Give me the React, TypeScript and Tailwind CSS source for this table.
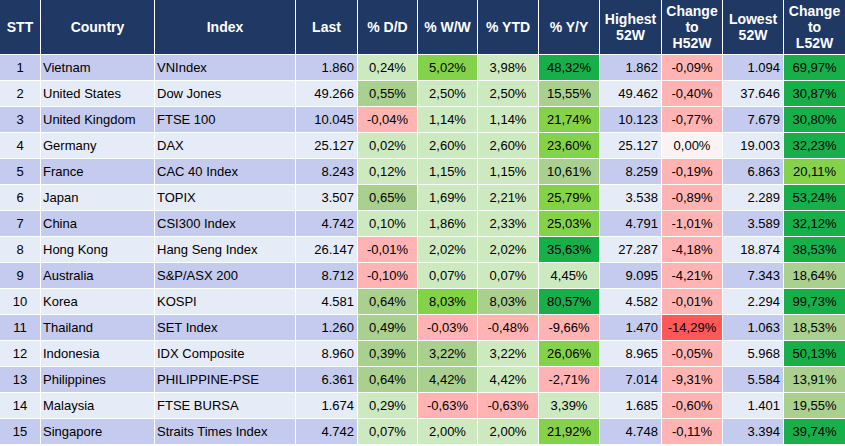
import React from "react";

type Tone = "L" | "M" | "B" | "D" | "R" | "X" | "N";

interface Row {
  country: string;
  index: string;
  last: string;
  dd: [string, Tone];
  ww: [string, Tone];
  ytd: [string, Tone];
  yy: [string, Tone];
  high: string;
  toHigh: [string, Tone];
  low: string;
  toLow: [string, Tone];
}

const tones: Record<Tone, string> = {
  L: "bg-[#cde9bf]",
  M: "bg-[#a9d08e]",
  B: "bg-[#84d24a]",
  D: "bg-[#18ae4a]",
  R: "bg-[#ffb3b3]",
  X: "bg-[#ff5858]",
  N: "bg-[#fbf3f3]",
};

const rows: Row[] = [
  { country: "Vietnam", index: "VNIndex", last: "1.860", dd: ["0,24%", "L"], ww: ["5,02%", "B"], ytd: ["3,98%", "L"], yy: ["48,32%", "D"], high: "1.862", toHigh: ["-0,09%", "R"], low: "1.094", toLow: ["69,97%", "D"] },
  { country: "United States", index: "Dow Jones", last: "49.266", dd: ["0,55%", "M"], ww: ["2,50%", "L"], ytd: ["2,50%", "L"], yy: ["15,55%", "M"], high: "49.462", toHigh: ["-0,40%", "R"], low: "37.646", toLow: ["30,87%", "D"] },
  { country: "United Kingdom", index: "FTSE 100", last: "10.045", dd: ["-0,04%", "R"], ww: ["1,14%", "L"], ytd: ["1,14%", "L"], yy: ["21,74%", "B"], high: "10.123", toHigh: ["-0,77%", "R"], low: "7.679", toLow: ["30,80%", "D"] },
  { country: "Germany", index: "DAX", last: "25.127", dd: ["0,02%", "L"], ww: ["2,60%", "L"], ytd: ["2,60%", "L"], yy: ["23,60%", "B"], high: "25.127", toHigh: ["0,00%", "N"], low: "19.003", toLow: ["32,23%", "D"] },
  { country: "France", index: "CAC 40 Index", last: "8.243", dd: ["0,12%", "L"], ww: ["1,15%", "L"], ytd: ["1,15%", "L"], yy: ["10,61%", "M"], high: "8.259", toHigh: ["-0,19%", "R"], low: "6.863", toLow: ["20,11%", "B"] },
  { country: "Japan", index: "TOPIX", last: "3.507", dd: ["0,65%", "M"], ww: ["1,69%", "L"], ytd: ["2,21%", "L"], yy: ["25,79%", "B"], high: "3.538", toHigh: ["-0,89%", "R"], low: "2.289", toLow: ["53,24%", "D"] },
  { country: "China", index: "CSI300 Index", last: "4.742", dd: ["0,10%", "L"], ww: ["1,86%", "L"], ytd: ["2,33%", "L"], yy: ["25,03%", "B"], high: "4.791", toHigh: ["-1,01%", "R"], low: "3.589", toLow: ["32,12%", "D"] },
  { country: "Hong Kong", index: "Hang Seng Index", last: "26.147", dd: ["-0,01%", "R"], ww: ["2,02%", "L"], ytd: ["2,02%", "L"], yy: ["35,63%", "D"], high: "27.287", toHigh: ["-4,18%", "R"], low: "18.874", toLow: ["38,53%", "D"] },
  { country: "Australia", index: "S&P/ASX 200", last: "8.712", dd: ["-0,10%", "R"], ww: ["0,07%", "L"], ytd: ["0,07%", "L"], yy: ["4,45%", "L"], high: "9.095", toHigh: ["-4,21%", "R"], low: "7.343", toLow: ["18,64%", "M"] },
  { country: "Korea", index: "KOSPI", last: "4.581", dd: ["0,64%", "M"], ww: ["8,03%", "B"], ytd: ["8,03%", "M"], yy: ["80,57%", "D"], high: "4.582", toHigh: ["-0,01%", "R"], low: "2.294", toLow: ["99,73%", "D"] },
  { country: "Thailand", index: "SET Index", last: "1.260", dd: ["0,49%", "M"], ww: ["-0,03%", "R"], ytd: ["-0,48%", "R"], yy: ["-9,66%", "R"], high: "1.470", toHigh: ["-14,29%", "X"], low: "1.063", toLow: ["18,53%", "M"] },
  { country: "Indonesia", index: "IDX Composite", last: "8.960", dd: ["0,39%", "M"], ww: ["3,22%", "M"], ytd: ["3,22%", "L"], yy: ["26,06%", "B"], high: "8.965", toHigh: ["-0,05%", "R"], low: "5.968", toLow: ["50,13%", "D"] },
  { country: "Philippines", index: "PHILIPPINE-PSE", last: "6.361", dd: ["0,64%", "M"], ww: ["4,42%", "M"], ytd: ["4,42%", "L"], yy: ["-2,71%", "R"], high: "7.014", toHigh: ["-9,31%", "R"], low: "5.584", toLow: ["13,91%", "M"] },
  { country: "Malaysia", index: "FTSE BURSA", last: "1.674", dd: ["0,29%", "L"], ww: ["-0,63%", "R"], ytd: ["-0,63%", "R"], yy: ["3,39%", "L"], high: "1.685", toHigh: ["-0,60%", "R"], low: "1.401", toLow: ["19,55%", "M"] },
  { country: "Singapore", index: "Straits Times Index", last: "4.742", dd: ["0,07%", "L"], ww: ["2,00%", "L"], ytd: ["2,00%", "L"], yy: ["21,92%", "B"], high: "4.748", toHigh: ["-0,11%", "R"], low: "3.394", toLow: ["39,74%", "D"] },
];

// header labels, one entry per line
const headers: string[][] = [
  ["STT"],
  ["Country"],
  ["Index"],
  ["Last"],
  ["% D/D"],
  ["% W/W"],
  ["% YTD"],
  ["% Y/Y"],
  ["Highest", "52W"],
  ["Change", "to", "H52W"],
  ["Lowest", "52W"],
  ["Change", "to", "L52W"],
];

function Pct({ v }: { v: [string, Tone] }) {
  return (
    <div className={`flex items-center justify-center ${tones[v[1]]}`}>{v[0]}</div>
  );
}

export default function App() {
  return (
    <div
      className="w-[845px] h-[446px] bg-white text-black overflow-hidden"
      style={{ fontFamily: '"Liberation Sans", Arial, sans-serif' }}
    >
      <div className="grid grid-cols-[40px_113px_140px_61px_59px_59px_60px_60px_61px_60px_60px_61px] grid-rows-[54px] auto-rows-[25px] gap-px bg-white text-[13px]">
        {headers.map((lines, i) => (
          <div
            key={i}
            className="bg-[#1f3864] text-white font-bold text-[14px] leading-[16px] flex flex-col items-center justify-center text-center"
          >
            {lines.map((line) => (
              <span key={line}>{line}</span>
            ))}
          </div>
        ))}

        {rows.map((r, i) => {
          const base = i % 2 === 0 ? "bg-[#c4cbee]" : "bg-[#e6ebf8]";
          return (
            <React.Fragment key={r.country}>
              <div className={`flex items-center justify-center ${base}`}>{i + 1}</div>
              <div className={`flex items-center pl-[2px] ${base}`}>{r.country}</div>
              <div className={`flex items-center pl-[2px] ${base}`}>{r.index}</div>
              <div className={`flex items-center justify-end pr-[3px] ${base}`}>{r.last}</div>
              <Pct v={r.dd} />
              <Pct v={r.ww} />
              <Pct v={r.ytd} />
              <Pct v={r.yy} />
              <div className={`flex items-center justify-end pr-[3px] ${base}`}>{r.high}</div>
              <Pct v={r.toHigh} />
              <div className={`flex items-center justify-end pr-[3px] ${base}`}>{r.low}</div>
              <Pct v={r.toLow} />
            </React.Fragment>
          );
        })}
      </div>
    </div>
  );
}
